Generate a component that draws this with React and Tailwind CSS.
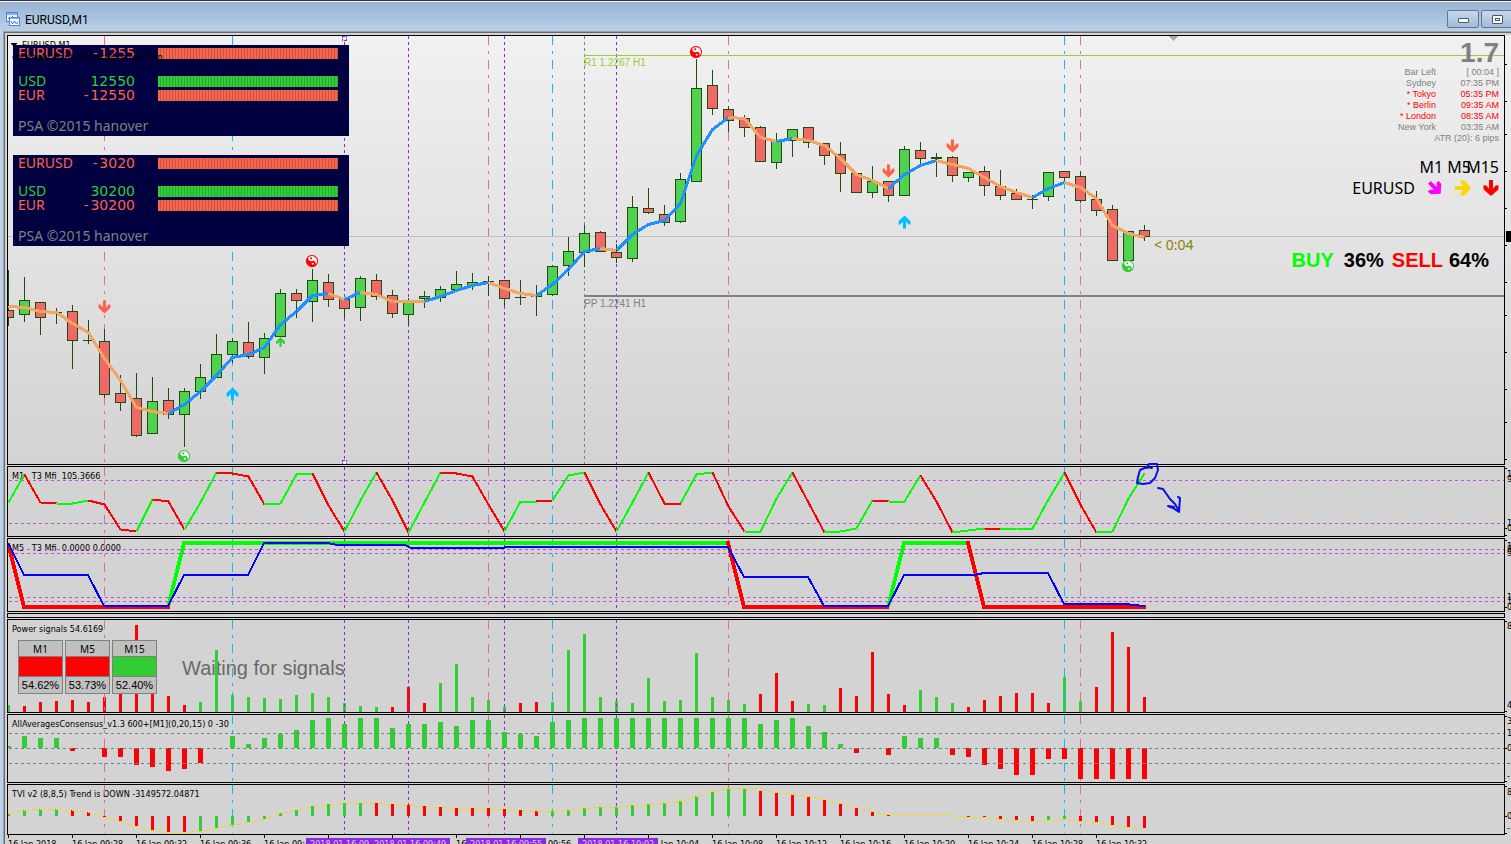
import React from "react";

const GREEN = "#32cd32";
const RED = "#ff0000";
const barX = (k) => 8 + 16 * k;

// high, low, open/close top, open/close bottom, direction (g = up, r = down, d = doji)
const CANDLES = [
  [270, 326, 310, 318, "r"], [277, 322, 300, 315, "g"], [302, 335, 302, 318, "r"], [308, 324, 312, 313, "d"],
  [305, 369, 311, 341, "r"], [320, 344, 340, 341, "d"], [329, 398, 341, 395, "r"], [375, 411, 393, 403, "r"],
  [373, 437, 398, 436, "r"], [377, 434, 401, 434, "g"], [388, 419, 400, 415, "r"], [388, 447, 391, 415, "g"],
  [364, 399, 377, 392, "g"], [334, 378, 354, 378, "g"], [338, 363, 341, 355, "g"], [322, 359, 342, 357, "r"],
  [333, 374, 338, 358, "g"], [289, 337, 293, 337, "g"], [289, 318, 293, 301, "r"], [269, 322, 280, 302, "g"],
  [274, 307, 282, 300, "r"], [299, 318, 299, 309, "r"], [276, 321, 278, 308, "g"], [274, 300, 280, 297, "r"],
  [290, 318, 295, 314, "r"], [298, 325, 302, 315, "g"], [291, 308, 296, 299, "g"], [286, 302, 289, 298, "g"],
  [271, 291, 284, 290, "g"], [273, 290, 282, 286, "g"], [276, 296, 281, 282, "d"], [280, 306, 280, 299, "r"],
  [280, 305, 297, 298, "d"], [285, 316, 294, 297, "g"], [265, 296, 266, 295, "g"], [237, 276, 251, 266, "g"],
  [225, 267, 233, 253, "g"], [231, 252, 232, 252, "r"], [244, 263, 252, 258, "r"], [196, 262, 207, 259, "g"],
  [188, 214, 208, 213, "r"], [205, 226, 214, 223, "r"], [173, 223, 179, 222, "g"], [59, 182, 88, 182, "g"],
  [70, 115, 85, 109, "r"], [106, 132, 109, 121, "r"], [115, 137, 118, 128, "r"], [126, 162, 127, 162, "r"],
  [133, 169, 141, 163, "g"], [129, 157, 129, 141, "g"], [127, 148, 127, 143, "r"], [143, 165, 143, 156, "r"],
  [142, 192, 154, 174, "r"], [173, 193, 173, 193, "r"], [166, 198, 181, 193, "g"], [181, 202, 181, 196, "r"],
  [146, 196, 149, 196, "g"], [142, 165, 150, 159, "r"], [153, 177, 157, 159, "d"], [156, 182, 157, 176, "r"],
  [172, 182, 172, 178, "g"], [166, 196, 171, 186, "r"], [170, 200, 186, 196, "r"], [189, 200, 193, 200, "r"],
  [195, 209, 199, 200, "d"], [172, 201, 172, 197, "g"], [171, 181, 171, 178, "r"], [171, 203, 176, 201, "r"],
  [191, 216, 199, 211, "r"], [205, 261, 209, 261, "r"], [231, 261, 231, 261, "g"], [225, 241, 230, 237, "r"],
];

const AVERAGE = [
  306, 307, 311, 312, 323, 332, 358, 380, 407, 411, 413, 404, 391, 375, 357, 354, 347, 324, 311, 295, 293, 299, 292,
  294, 301, 301, 301, 296, 290, 285, 282, 288, 293, 295, 284, 269, 251, 248, 250, 234, 224, 220, 203, 155, 129, 117,
  118, 137, 141, 138, 140, 145, 158, 174, 180, 188, 174, 165, 160, 164, 168, 177, 186, 192, 197, 188, 182, 187, 198,
  225, 233, 237,
];
// index at which the line changes colour, starting with the falling one
const AVERAGE_TURNS = [0, 10, 20, 21, 22, 26, 30, 33, 37, 38, 45, 48, 49, 55, 58, 64, 66, 71];

const MFI = [
  502, 474, 502, 503, 503, 500, 504, 529, 531, 499, 501, 529, 502, 472, 473, 476, 504, 503, 474, 473, 505, 531, 500,
  472, 500, 532, 502, 472, 473, 476, 504, 531, 501, 501, 500, 475, 472, 504, 531, 502, 472, 503, 503, 474, 472, 506,
  531, 531, 498, 472, 502, 532, 531, 528, 500, 501, 501, 475, 501, 532, 530, 528, 529, 528, 528, 499, 472, 504, 532,
  531, 498, 473,
];
const MFI_TURNS = [
  0, 1, 3, 5, 8, 9, 11, 13, 16, 19, 21, 23, 25, 27, 31, 33, 34, 36, 38, 40, 42, 44, 46, 49, 51, 54, 55, 57, 59, 61, 62,
  66, 68, 71,
];

const POWER = [
  705, 706, 702, 701, 700, 702, 697, 690, 625, 690, 696, 705, 702, 650, 695, 697, 698, 699, 695, 693, 697, 703, 706,
  707, 707, 687, 703, 683, 664, 697, 700, 707, 703, 702, 702, 650, 634, 697, 701, 703, 678, 701, 700, 653, 697, 700,
  704, 694, 673, 701, 704, 705, 688, 696, 652, 694, 705, 690, 697, 703, 707, 700, 696, 693, 693, 703, 677, 701, 687,
  632, 647, 697,
];
const POWER_SIDE = "grrrrrrrrrrrggggggggggggrrrgggggrrgggggggggggggrrrggrrrrrgggrrrrrrggrrrr";

const CONSENSUS = [
  746, 736, 738, 738, 751, 748, 757, 757, 765, 767, 771, 769, 763, 748, 736, 744, 738, 734, 730, 720, 718, 724, 718,
  718, 728, 724, 724, 722, 726, 720, 720, 732, 734, 736, 722, 720, 718, 718, 718, 718, 718, 718, 718, 718, 718, 718,
  718, 724, 720, 718, 726, 732, 744, 753, 748, 755, 736, 738, 738, 755, 757, 765, 769, 775, 775, 759, 759, 779, 779,
  779, 779, 779,
];

const TVI = [
  813, 810, 809, 809, 810, 812, 817, 821, 826, 830, 832, 832, 831, 828, 825, 822, 819, 813, 810, 806, 804, 803, 803,
  803, 804, 805, 806, 807, 808, 808, 808, 809, 810, 811, 811, 810, 808, 807, 807, 805, 804, 803, 801, 796, 791, 788,
  788, 790, 792, 794, 796, 799, 803, 807, 811, 814, 815, 815, 815, 815, 817, 817, 819, 820, 821, 820, 819, 821, 822,
  825, 827, 828,
];
const TVI_SIDE = "ggggrrrrrrrrgggggggggggrrrrrrrrrrrgggggggggggggrrrrrrrrrrrgrrrrrrggrrrrr";

const POWER_TABLE = [
  { frame: "M1", value: "54.62%", fill: "bg-[#ff0000]" },
  { frame: "M5", value: "53.73%", fill: "bg-[#ff0000]" },
  { frame: "M15", value: "52.40%", fill: "bg-[#32cd32]" },
];

const CLOCKS = [
  { city: "Bar Left", time: "[ 00:04 ]", open: false },
  { city: "Sydney", time: "07:35 PM", open: false },
  { city: "* Tokyo", time: "05:35 PM", open: true },
  { city: "* Berlin", time: "09:35 AM", open: true },
  { city: "* London", time: "08:35 AM", open: true },
  { city: "New York", time: "03:35 AM", open: false },
];

const TIMES = [
  "16 Jan 2018", "16 Jan 09:28", "16 Jan 09:32", "16 Jan 09:36", "16 Jan 09:40", "16 Jan 09:44", "16 Jan 09:48",
  "16 Jan 09:52", "16 Jan 09:56", "16 Jan 10:00", "16 Jan 10:04", "16 Jan 10:08", "16 Jan 10:12", "16 Jan 10:16",
  "16 Jan 10:20", "16 Jan 10:24", "16 Jan 10:28", "16 Jan 10:32",
];

const MARKED_TIMES = [
  { label: "2018.01.16 09:45", place: "left-[299px]" },
  { label: "2018.01.16 09:49", place: "left-[363px]" },
  { label: "2018.01.16 09:55", place: "left-[459px]" },
  { label: "2018.01.16 10:02", place: "left-[571px]" },
];

function VerticalLines({ top }) {
  const line = (x, stroke, dash) => (
    <line key={x} x1={x + 0.5} x2={x + 0.5} y1={top} y2="2000" stroke={stroke} strokeDasharray={dash} />
  );
  return (
    <g>
      {[104, 488, 728, 1080].map((x) => line(x, "#db7093", "9 6 3 6"))}
      {[232, 552, 1064].map((x) => line(x, "#00bfff", "9 6 3 6"))}
      {[344, 408, 504, 616].map((x) => line(x, "#8a2be2", "3 3"))}
    </g>
  );
}

function Levels({ ys, stroke }) {
  return ys.map((y) => (
    <line key={y} x1="9" x2="110%" y1={y + 0.5} y2={y + 0.5} stroke={stroke} strokeDasharray="3 3" />
  ));
}

function TurningLine({ values, turns, colors, width }) {
  return turns.slice(0, -1).map((from, i) => (
    <polyline
      key={from}
      fill="none"
      stroke={colors[i % 2]}
      strokeWidth={width}
      points={values
        .slice(from, turns[i + 1] + 1)
        .map((y, j) => `${barX(from + j) + 0.5},${y + 0.5}`)
        .join(" ")}
    />
  ));
}

function Bars({ values, base, width, sides }) {
  return values.map((y, k) => {
    const color = sides ? (sides[k] === "g" ? GREEN : RED) : y < base ? GREEN : RED;
    return (
      <rect
        key={k}
        x={barX(k) - (width - 1) / 2}
        width={width}
        y={Math.min(y, base)}
        height={Math.abs(base - y)}
        fill={color}
      />
    );
  });
}

function Candles() {
  return CANDLES.map(([high, low, top, bottom, side], k) => {
    const x = barX(k);
    return (
      <g key={k}>
        <rect x={x} y={high} width="1" height={low - high} fill="#1f4d0f" />
        {side === "d" ? (
          <rect x={x - 5} y={top} width="11" height={bottom - top} fill="#1f4d0f" />
        ) : (
          <rect
            x={x - 4.5}
            y={top + 0.5}
            width="10"
            height={bottom - top - 1}
            fill={side === "g" ? "#50d250" : "#f06868"}
            stroke="#1f4d0f"
          />
        )}
      </g>
    );
  });
}

function Arrow({ x, y, color, turn = 0, size = 1 }) {
  return (
    <path
      shapeRendering="auto"
      transform={`translate(${x},${y}) rotate(${turn}) scale(${size})`}
      fill={color}
      d="M-1.500,-6.500H1.500V0.500L4.200,-2.400L6,-2.600L5.800,1L0,6.500L-5.800,1L-6,-2.600L-4.200,-2.400L-1.500,0.500Z"
    />
  );
}

function YinYang({ x, y, color }) {
  return (
    <g transform={`translate(${x},${y}) rotate(-20)`} shapeRendering="auto">
      <circle r="5.600" fill="#f6f6f6" stroke={color} />
      <path fill={color} d="M0,-5.600A5.600,5.600 0 0 0 0,5.600A2.800,2.800 0 0 0 0,0A2.800,2.800 0 0 1 0,-5.600Z" />
      <circle cx="0.200" cy="-2.800" r="1" fill={color} />
      <circle cx="-0.200" cy="2.800" r="1" fill="#f6f6f6" />
    </g>
  );
}

function Scale({ top, ticks, labels = [], children }) {
  return (
    <svg className="block w-1.5 shrink-0 self-stretch" shapeRendering="crispEdges">
      <g transform={`translate(0,${-top})`}>
        {ticks.map((y) => (
          <rect key={y} x="0" y={y} width="2" height="1" fill="#000" />
        ))}
        {children}
        {labels.map(([y, text]) => (
          <text key={y} x="2" y={y + 3} className="font-['DejaVu_Sans_Condensed','DejaVu_Sans',sans-serif] text-[9px]">
            {text}
          </text>
        ))}
      </g>
    </svg>
  );
}

function Pane({ className, top, title, scale, under, over, children }) {
  return (
    <section className={`flex ${className}`}>
      <div className="relative min-w-0 flex-1 border border-black">
        {title && (
          <h2 className="px-1 pt-[3px] font-['DejaVu_Sans_Condensed','DejaVu_Sans',sans-serif] text-[9px] leading-3 whitespace-pre">
            {title}
          </h2>
        )}
        {under}
        <svg className="absolute inset-0 block h-full w-full" shapeRendering="crispEdges">
          <g transform={`translate(-8,${-(top + 1)})`}>{children}</g>
        </svg>
        {over}
      </div>
      {scale}
    </section>
  );
}

const STRIPES = {
  red: "bg-[repeating-linear-gradient(90deg,#ff6347_0_2px,#c0564a_2px_3px)]",
  green: "bg-[repeating-linear-gradient(90deg,#32cd32_0_2px,#28a838_2px_3px)]",
};

function StrengthRow({ name, value, tone }) {
  const negative = value.startsWith("-");
  return (
    <div className={`flex h-3.5 ${tone === "red" ? "text-[#ff6347]" : "text-[#32cd32]"}`}>
      <span className="w-14 leading-3">{name}</span>
      <span className="w-[61px] text-right font-['DejaVu_Sans',sans-serif] leading-3">
        {negative && <span className="font-['DejaVu_Sans_Mono',monospace]">-</span>}
        {negative ? value.slice(1) : value}
      </span>
      <span className={`mt-px ml-[23px] h-[11px] w-[180px] ${STRIPES[tone]}`} />
    </div>
  );
}

function StrengthPanel({ pair, amount }) {
  return (
    <div className="h-[91px] w-[336px] bg-[#000040] pt-0.5 pl-[5px] font-['Noto_Sans',sans-serif] text-sm">
      <StrengthRow name="EURUSD" value={pair} tone="red" />
      <div className="mt-3.5">
        <StrengthRow name="USD" value={amount} tone="green" />
        <StrengthRow name="EUR" value={`-${amount}`} tone="red" />
      </div>
      <p className="mt-[15px] leading-4 text-[#808080]">PSA ©2015 hanover</p>
    </div>
  );
}

function SmallArrow({ color, turn }) {
  return (
    <svg className="h-4 w-4" viewBox="-8 -8 16 16">
      <path
        transform={`rotate(${turn})`}
        fill={color}
        d="M-2,-8H2V0.500L4.800,-2.400L7.600,-2.800L7.400,1.600L0,8L-7.400,1.600L-7.600,-2.800L-4.800,-2.400L-2,0.500Z"
      />
    </svg>
  );
}

function MarketInfo() {
  return (
    <div className="absolute top-0.5 right-[5px] flex flex-col items-end">
      <p className="font-['Liberation_Sans',sans-serif] text-[28px] leading-[29px] font-bold text-[#808080]">1.7</p>
      <table className="font-['Liberation_Sans',sans-serif] text-[9px] leading-[11px] text-[#808080]">
        <tbody>
          {CLOCKS.map(({ city, time, open }) => (
            <tr key={city} className={open ? "text-[#ff0000]" : ""}>
              <th className="p-0 text-right font-normal">{city}</th>
              <td className="w-[63px] p-0 text-right">{time}</td>
            </tr>
          ))}
          <tr>
            <td colSpan="2" className="p-0 text-right">ATR (20): 6 pips</td>
          </tr>
        </tbody>
      </table>
      <div className="mt-[13px] flex font-['Noto_Sans',sans-serif] text-base leading-5">
        <span className="mr-1">M1</span>
        <span className="w-[19px]">M5</span>
        <span>M15</span>
      </div>
      <div className="mt-px flex items-center gap-3 font-['Noto_Sans',sans-serif] text-base leading-5">
        <span>EURUSD</span>
        <SmallArrow color="#ff00ff" turn={-45} />
        <SmallArrow color="#ffd700" turn={-90} />
        <SmallArrow color="#ff0000" turn={0} />
      </div>
      <p className="mt-[50px] mr-2.5 flex font-['Liberation_Sans',sans-serif] text-xl leading-6 font-bold">
        <span className="mr-2.5 text-[#00ff00]">BUY</span>
        <span className="mr-2">36%</span>
        <span className="mr-1.5 text-[#ff0000]">SELL</span>
        <span>64%</span>
      </p>
    </div>
  );
}

function PowerTable() {
  const cell = "w-[45px] border border-[#808080] p-0 text-center font-normal";
  return (
    <table className="absolute top-5 left-2 border-separate border-spacing-x-[2px] border-spacing-y-0 text-[11px]">
      <thead>
        <tr>
          {POWER_TABLE.map(({ frame }) => (
            <th key={frame} className={`${cell} h-[17px] bg-[#c0c0c0] font-['Noto_Sans',sans-serif] text-[10px] leading-[14px]`}>
              {frame}
            </th>
          ))}
        </tr>
      </thead>
      <tbody>
        <tr>
          {POWER_TABLE.map(({ frame, fill }) => (
            <td key={frame} className={`${cell} h-[19px] border-y-0 ${fill}`} />
          ))}
        </tr>
        <tr>
          {POWER_TABLE.map(({ frame, value }) => (
            <td key={frame} className={`${cell} h-[18px] bg-[#c0c0c0] pt-px font-['Liberation_Sans',sans-serif] leading-[15px]`}>
              {value}
            </td>
          ))}
        </tr>
      </tbody>
    </table>
  );
}

function TitleBar() {
  const button =
    "flex h-[18px] w-8 items-center justify-center rounded-[2px] border border-[#5b7796] bg-linear-to-b from-[#c6d8eb] to-[#a3bcd8]";
  return (
    <header className="flex h-[31px] shrink-0 justify-between overflow-hidden border-t border-[#33333d] bg-linear-to-b from-[#98b2d1] to-[#b9d0ea] shadow-[inset_0_1px_0_#f4f8fc]">
      <div className="flex items-center gap-[3px] pt-2 pl-1.5">
        <svg className="h-4 w-4" viewBox="0 0 16 16" shapeRendering="crispEdges">
          <rect x="0.5" y="0.5" width="11" height="9" rx="1" fill="#eef5ff" stroke="#4a86dc" />
          <rect x="1" y="1" width="10" height="2" fill="#7fb0f0" />
          <path d="M2,7l2,-2l1,1l2,-2" fill="none" stroke="#4a86dc" shapeRendering="auto" />
          <rect x="3.5" y="5.5" width="10" height="8" rx="1" fill="#fff" stroke="#4a86dc" />
          <rect x="4" y="6" width="9" height="1" fill="#7fb0f0" />
          <path d="M5,9l1.500,3l2,-3l2,3l1.500,-2.500" fill="none" stroke="#3b78d0" shapeRendering="auto" />
        </svg>
        <h1 className="font-[Roboto,sans-serif] text-xs text-black">EURUSD,M1</h1>
      </div>
      <div className="-mr-0.5 flex gap-0.5 pt-[9px]">
        <button type="button" aria-label="Minimize" className={button}>
          <span className="mt-0.5 h-[5px] w-[11px] rounded-[1px] border border-[#4a5666] bg-white" />
        </button>
        <button type="button" aria-label="Restore" className={button}>
          <span className="flex h-[9px] w-[11px] items-center justify-center rounded-[1px] border border-[#4a5666] bg-white">
            <span className="h-[3px] w-[5px] border border-[#4a5666]" />
          </span>
        </button>
      </div>
    </header>
  );
}

function MainPane() {
  return (
    <Pane
      className="min-h-[430px] flex-1 bg-linear-to-b from-[#f1f1f1] to-[#d3d3d3]"
      top={35}
      over={
        <>
          <div className="absolute top-[3px] left-0.5 flex items-center gap-1">
            <svg className="h-1 w-2" viewBox="0 0 8 4">
              <path d="M0.500,0H7.500L4,4Z" />
            </svg>
            <h2 className="font-['DejaVu_Sans_Condensed','DejaVu_Sans',sans-serif] text-[9px] leading-3">EURUSD,M1</h2>
          </div>
          <div className="absolute top-[9px] left-[5px] flex flex-col gap-[19px]">
            <StrengthPanel pair="-1255" amount="12550" />
            <StrengthPanel pair="-3020" amount="30200" />
          </div>
          <p className="absolute top-[15px] left-1 font-['DejaVu_Sans_Condensed','DejaVu_Sans',sans-serif] text-[9px] leading-3">
            copyright wardahwttar@hotmail.com
          </p>
          <MarketInfo />
        </>
      }
      scale={
        <Scale top={35} ticks={[64, 101, 134, 171, 208, 245, 282, 315, 352, 389, 422, 459]}>
          <rect x="1" y="231" width="5" height="11" fill="#000" />
        </Scale>
      }
    >
      <VerticalLines top={36} />
      <line x1="584.5" x2="584.5" y1="36" y2="2000" stroke="#808080" strokeDasharray="3 3" />
      <line x1="8" x2="110%" y1="236.5" y2="236.5" stroke="#c0c0c0" />
      <line x1="584" x2="110%" y1="55.5" y2="55.5" stroke="#9acd32" />
      <line x1="584" x2="110%" y1="296" y2="296" stroke="#808080" strokeWidth="2" />
      <path d="M1169,36H1178L1173.500,41Z" fill="#a9a9a9" />
      <Candles />
      <TurningLine values={AVERAGE} turns={AVERAGE_TURNS} colors={["#f4a460", "#1e90ff"]} width="3" />
      <rect x="342.500" y="36.500" width="4" height="4" fill="#f4f4f4" stroke="#8a2be2" strokeDasharray="2 1" />
      <rect x="342.500" y="460.500" width="4" height="4" fill="#fff" stroke="#8a2be2" strokeDasharray="2 1" />
      <g className="font-['Liberation_Sans',sans-serif] text-[10px]">
        <text x="584" y="66" fill="#9acd32">R1 1.2267 H1</text>
        <text x="584" y="307" fill="#808080">PP 1.2241 H1</text>
      </g>
      <text x="1154" y="250" fill="#8b8000" className="font-['Noto_Sans',sans-serif] text-sm">
        &lt; 0:04
      </text>
      <Arrow x={104.5} y={307} color="#ff6347" />
      <Arrow x={888.5} y={171} color="#ff6347" />
      <Arrow x={952.5} y={146} color="#ff6347" />
      <Arrow x={232.5} y={394} color="#00bfff" turn={180} />
      <Arrow x={904.5} y={222} color="#00bfff" turn={180} />
      <Arrow x={280.5} y={342} color={GREEN} turn={180} size={0.75} />
      <YinYang x={312} y={261} color="#ff0000" />
      <YinYang x={696} y={52} color="#ff0000" />
      <YinYang x={184} y={456} color={GREEN} />
      <YinYang x={1128} y={266} color={GREEN} />
    </Pane>
  );
}

function TimeAxis() {
  return (
    <div className="relative h-[9px] shrink-0 overflow-hidden font-['DejaVu_Sans_Condensed','DejaVu_Sans',sans-serif] text-[9px] leading-3 whitespace-nowrap">
      <div className="flex pl-px">
        {TIMES.map((time) => (
          <div key={time} className="w-16 shrink-0">
            <div className="h-[3px] w-px bg-black" />
            <span>{time}</span>
          </div>
        ))}
      </div>
      {MARKED_TIMES.map(({ label, place }) => (
        <span key={label} className={`absolute top-[3px] w-20 bg-[#8a2be2] pl-1 text-[#d3d3d3] ${place}`}>
          {label}
        </span>
      ))}
    </div>
  );
}

export default function App() {
  return (
    <div className="flex h-screen flex-col overflow-hidden bg-[#b9d1ea] text-black">
      <TitleBar />
      <main className="ml-[3px] flex min-h-0 flex-1 flex-col border-t border-l border-[#a0a0a0]">
        <div className="flex min-h-0 flex-1 flex-col gap-px border-t border-l border-[#696969] bg-[#d3d3d3] pt-0.5 pl-0.5">
          <MainPane />

          <Pane
            className="h-[71px]"
            top={466}
            title="M1   T3 Mfi  105.3666"
            scale={
              <Scale top={466} ticks={[468, 528, 535]} labels={[[474, "1"], [479, "9"], [523, "1"], [528, "0"]]} />
            }
            over={
              <svg className="pointer-events-none absolute -top-2 left-0 h-14 w-full" fill="none" stroke="#0b0bf0">
                <g transform="translate(-8,-459)" strokeWidth="2" strokeLinecap="round" strokeLinejoin="round">
                  <path d="M1152,468L1147,467L1140,470L1138,477L1137,483L1143,484L1150,483L1155,478L1158,470L1157,464L1149,464L1147,468" />
                  <path d="M1158,488L1163,489L1170,499L1175,504L1179,511M1178,497L1180,498L1179,512L1173,508L1168,506L1174,507" />
                </g>
              </svg>
            }
          >
            <VerticalLines top={467} />
            <Levels ys={[480, 523]} stroke="#ba55d3" />
            <TurningLine values={MFI} turns={MFI_TURNS} colors={["#00ff00", "#ff0000"]} width="2" />
          </Pane>

          <Pane
            className="h-[74px]"
            top={538}
            title="M5   T3 Mfi  0.0000 0.0000"
            scale={
              <Scale
                top={538}
                ticks={[540, 607]}
                labels={[[546, "1"], [549, "8"], [553, "9"], [597, "1"], [601, "1"], [607, "0"]]}
              />
            }
          >
            <VerticalLines top={539} />
            <Levels ys={[549, 553, 597, 601]} stroke="#ba55d3" />
            <g fill="none" strokeWidth="4">
              <path stroke="#00ff00" d="M168,607L184,543H728M888,607L904,543H968" />
              <path stroke="#ff0000" d="M8,543L24,607H170M728,541V543L744,607H889M968,541V543L984,607H1146" />
            </g>
            <path
              fill="none"
              stroke="#0000ff"
              strokeWidth="2"
              d="M8,543L24,575H88L104,606H168L184,575H248L264,543H328L337,545H405L411,548H504L505,547H728L744,577H808L824,606H888L904,575H974L984,573H1048L1064,604H1128L1132,605L1145,606"
            />
          </Pane>

          <div className="flex h-[5px]">
            <div className="flex-1 border border-black" />
            <div className="w-1.5" />
          </div>

          <Pane
            className="h-[94px]"
            top={619}
            title="Power signals 54.6169"
            under={
              <p className="pt-[21px] pl-[174px] font-['Liberation_Sans',sans-serif] text-xl leading-6 text-[#696969]">
                Waiting for signals
              </p>
            }
            over={<PowerTable />}
            scale={<Scale top={619} ticks={[621, 711]} labels={[[626, "8"], [705, "4"]]} />}
          >
            <Bars values={POWER} base={712} width={3} sides={POWER_SIDE} />
            <VerticalLines top={620} />
          </Pane>

          <Pane
            className="h-[69px]"
            top={714}
            title="AllAveragesConsensus_v1.3 600+[M1](0,20,15) 0 -30"
            scale={
              <Scale
                top={714}
                ticks={[716, 748, 781]}
                labels={[[721, "3"], [733, "1"], [748, "0"], [763, "-"], [776, "-"]]}
              />
            }
          >
            <VerticalLines top={715} />
            <Bars values={CONSENSUS} base={748} width={5} />
            <Levels ys={[733, 748, 763]} stroke="#708090" />
          </Pane>

          <Pane
            className="h-[51px]"
            top={784}
            title="TVI v2 (8,8,5) Trend is DOWN -3149572.04871"
            scale={<Scale top={784} ticks={[786, 816, 833]} labels={[[792, "8"], [816, "0"], [828, "-"]]} />}
          >
            <VerticalLines top={785} />
            <Bars values={TVI} base={816} width={3} sides={TVI_SIDE} />
            <polyline
              fill="none"
              stroke="#ffd700"
              strokeDasharray="5 3"
              points={TVI.map((y, k) => `${barX(k)},${y + 0.5}`).join(" ")}
            />
          </Pane>
          <div className="-mt-px shrink-0">
            <TimeAxis />
          </div>
        </div>
      </main>
    </div>
  );
}
